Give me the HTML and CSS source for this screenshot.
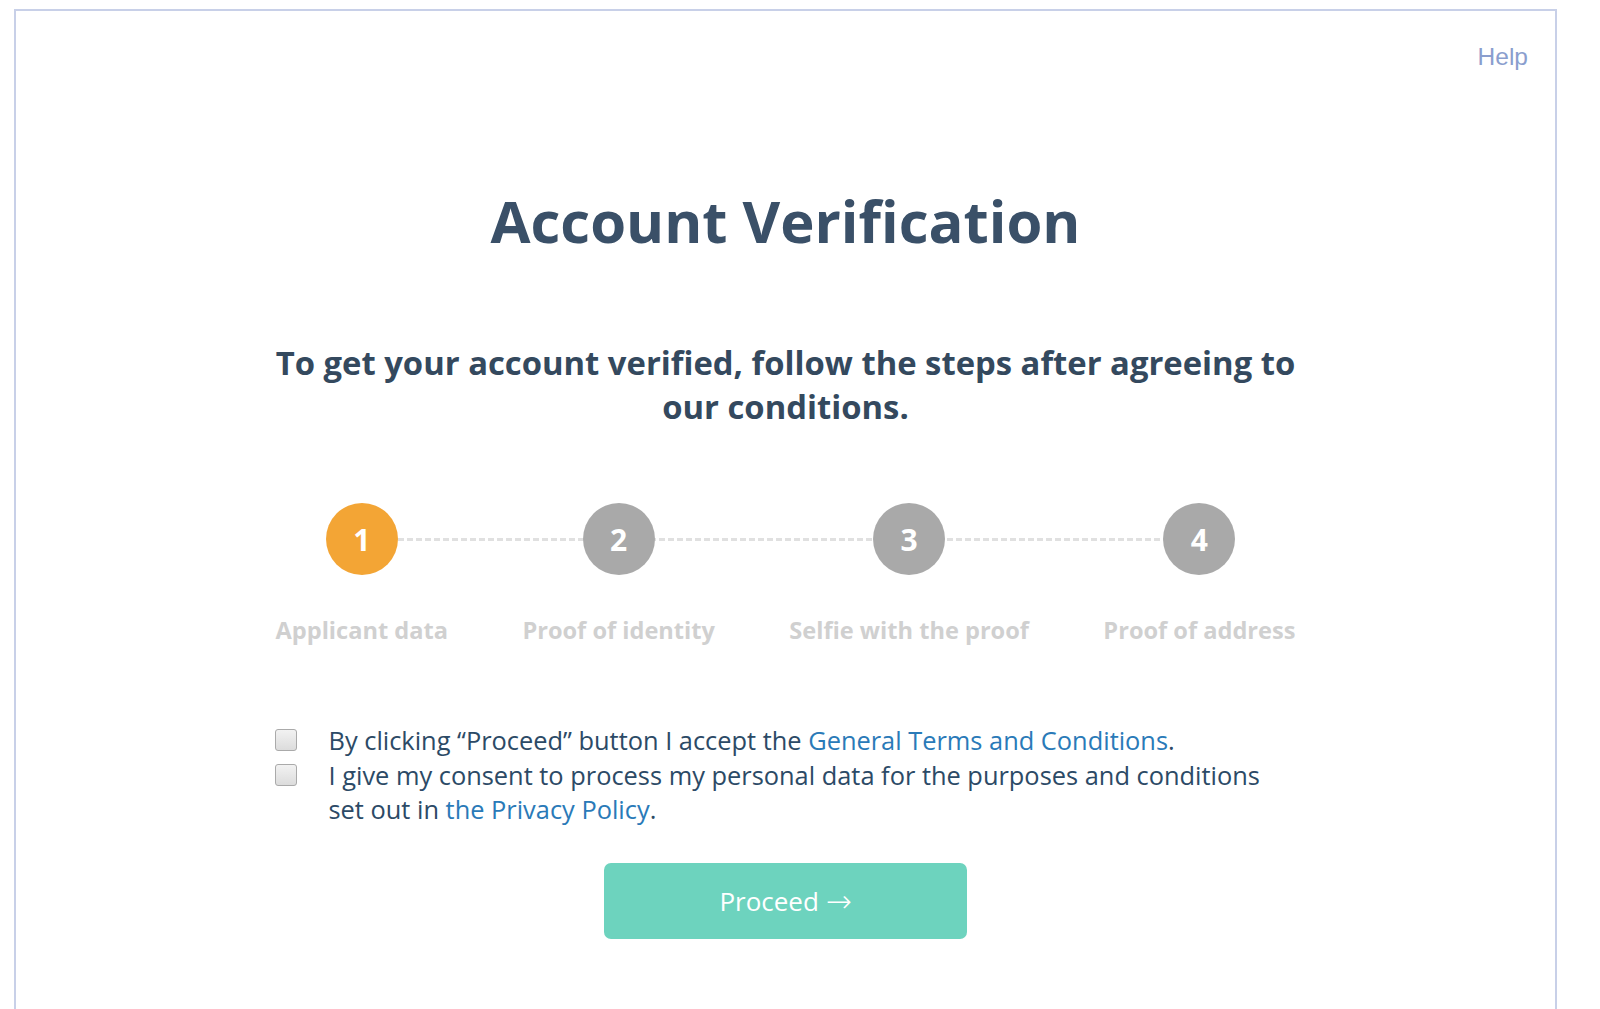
FILE: index.html
```html
<!DOCTYPE html>
<html lang="en">
<head>
<meta charset="utf-8">
<title>Account Verification</title>
<link rel="stylesheet" href="styles.css">
</head>
<body>
<div class="frame">
  <div class="topbar"><a class="help" href="#">Help</a></div>
  <main class="content">
    <h1 class="title">Account Verification</h1>
    <p class="subtitle">To get your account verified, follow the steps after agreeing to our conditions.</p>
    <ol class="steps">
      <li class="step active"><span class="circle">1</span><span class="label">Applicant data</span></li>
      <li class="step"><span class="circle">2</span><span class="label">Proof of identity</span></li>
      <li class="step"><span class="circle">3</span><span class="label">Selfie with the proof</span></li>
      <li class="step"><span class="circle">4</span><span class="label">Proof of address</span></li>
    </ol>
    <div class="consents">
      <label class="consent"><span class="box"></span><span class="ctext">By clicking “Proceed” button I accept the <a href="#">General Terms and Conditions</a>.</span></label>
      <label class="consent"><span class="box"></span><span class="ctext">I give my consent to process my personal data for the purposes and conditions set out in <a href="#">the Privacy Policy</a>.</span></label>
    </div>
    <button class="proceed" type="button">Proceed <span class="arrow">→</span></button>
  </main>
</div>
</body>
</html>
```

FILE: styles.css
```css
html, body {
  margin: 0;
  padding: 0;
  background: #ffffff;
}
body {
  font-family: "Open Sans", "Noto Sans", sans-serif;
  padding: 9px 0 0 14px;
  height: 1009px;
  box-sizing: border-box;
  overflow: hidden;
}
.frame {
  box-sizing: border-box;
  width: 1543px;
  height: 1000px;
  border: 2px solid #c8d0e8;
  border-bottom: none;
  background: #fff;
  overflow: hidden;
}
.topbar {
  display: flex;
  justify-content: flex-end;
  padding: 31px 27px 0 0;
  height: 49px;
}
.help {
  font-family: "Liberation Sans", Arial, sans-serif;
  font-size: 24.5px;
  line-height: 30px;
  color: #8a9ece;
  text-decoration: none;
}
.content {
  width: 1020px;
  margin: 0 auto;
  display: flex;
  flex-direction: column;
  align-items: center;
}
.title {
  margin: 90px 0 0;
  font-size: 58px;
  line-height: 80px;
  font-weight: 700;
  color: #3a5068;
}
.subtitle {
  margin: 80px 0 0;
  font-size: 32.8px;
  line-height: 44px;
  font-weight: 700;
  color: #34495e;
  text-align: center;
}
.steps {
  position: relative;
  list-style: none;
  margin: 74px 0 0;
  padding: 0;
  width: 100%;
  display: flex;
  justify-content: space-between;
}
.steps::before {
  content: "";
  position: absolute;
  left: 86px;
  right: 96px;
  top: 35px;
  height: 3px;
  background: repeating-linear-gradient(to right, #e0e0e0 0 6px, transparent 6px 9px);
}
.step {
  position: relative;
  display: flex;
  flex-direction: column;
  align-items: center;
}
.circle {
  width: 72px;
  height: 72px;
  border-radius: 50%;
  background: #a9a9a9;
  color: #fff;
  font-size: 30px;
  font-weight: 700;
  display: flex;
  align-items: center;
  justify-content: center;
}
.step.active .circle {
  background: #f3a535;
}
.label {
  margin-top: 40px;
  font-size: 23.6px;
  line-height: 30px;
  font-weight: 700;
  color: #d0d0d0;
  white-space: nowrap;
}
.consents {
  margin-top: 78px;
  width: 100%;
  display: flex;
  flex-direction: column;
  gap: 1px;
}
.consent {
  display: flex;
  align-items: flex-start;
  gap: 32px;
  font-size: 25.4px;
  line-height: 34px;
  color: #2c4a66;
}
.box {
  flex: none;
  box-sizing: border-box;
  width: 22px;
  height: 22px;
  margin-top: 6px;
  margin-left: -1px;
  border: 1px solid #aaaaaa;
  border-radius: 3px;
  background: linear-gradient(#f2f2f2, #dcdcdc);
}
.ctext {
  width: 962px;
}
.ctext a {
  color: #2a7ab8;
  text-decoration: none;
}
.proceed {
  margin-top: 37px;
  width: 363px;
  height: 76px;
  border: none;
  border-radius: 7px;
  background: #6dd3be;
  color: #fff;
  font-family: "Open Sans", "Noto Sans", sans-serif;
  font-size: 26px;
  line-height: 30px;
  cursor: pointer;
}
.arrow {
  font-family: "DejaVu Sans", sans-serif;
  font-size: 31px;
  line-height: 30px;
  font-weight: 300;
  vertical-align: -1px;
}
```
